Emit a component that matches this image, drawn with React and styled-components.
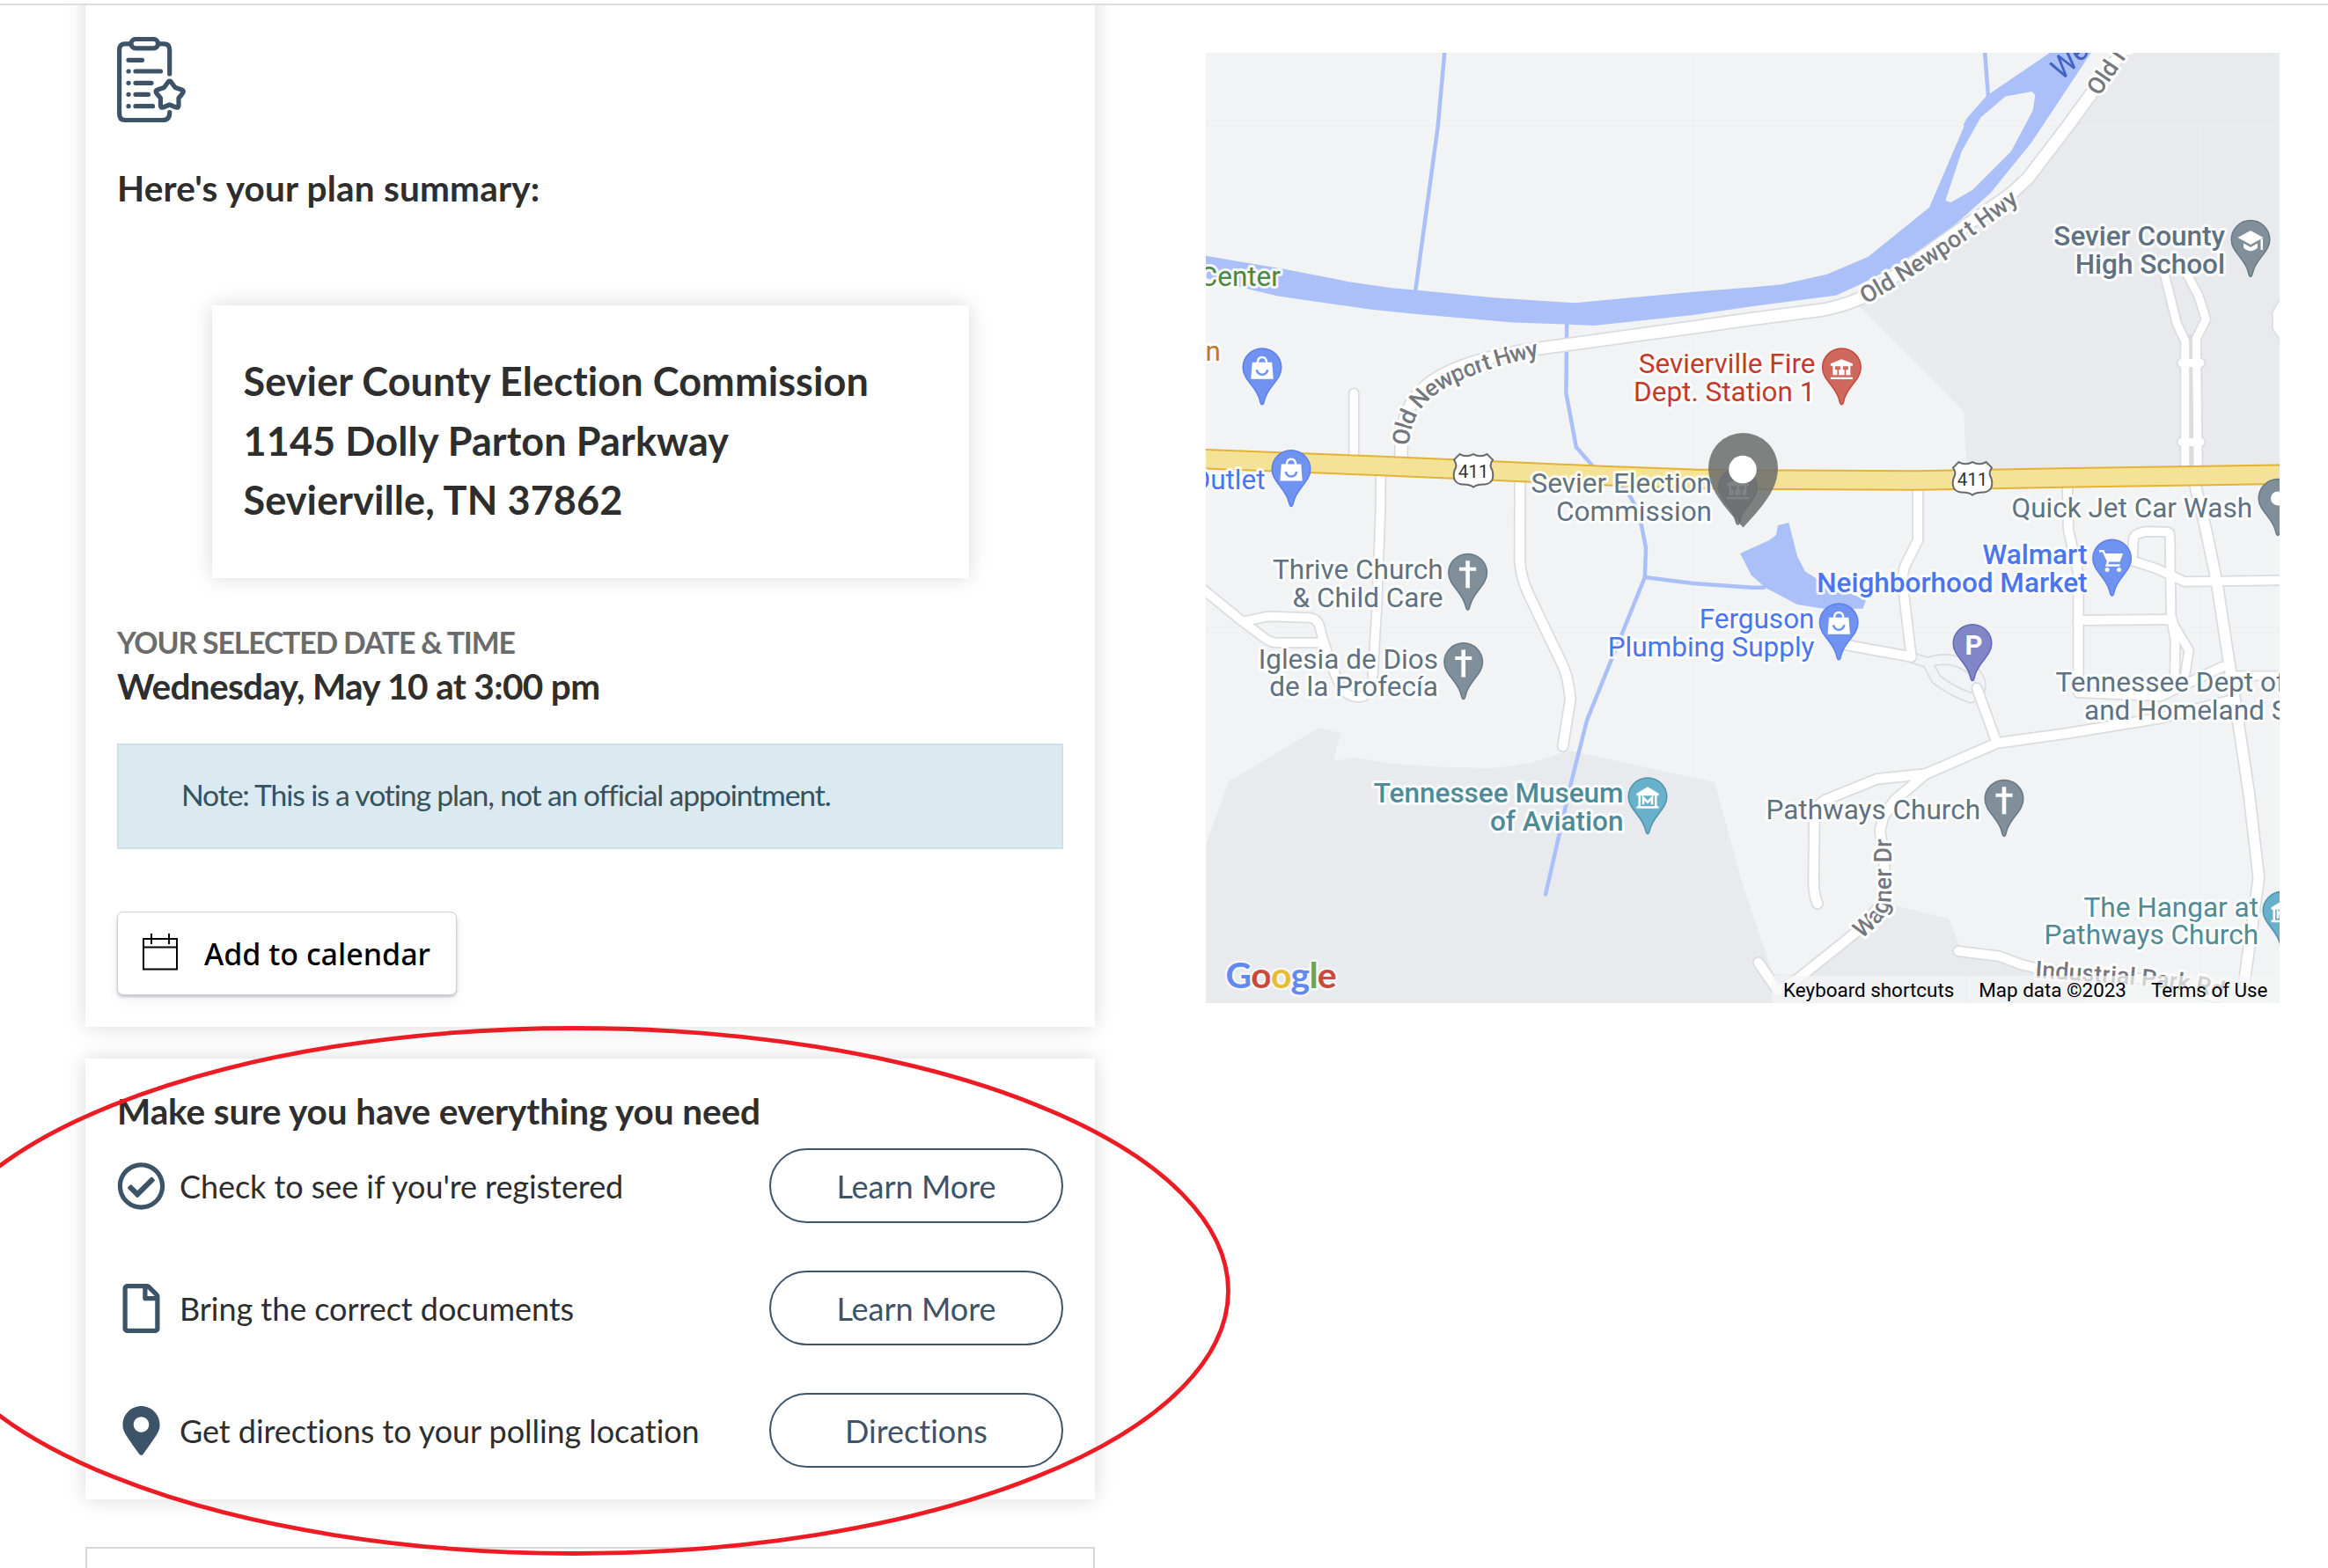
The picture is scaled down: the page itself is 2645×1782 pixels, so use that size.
import React from "react";
import styled, { createGlobalStyle, css } from "styled-components";
import { FaRegCheckCircle, FaRegFile, FaMapMarkerAlt } from "react-icons/fa";

const GlobalStyle = createGlobalStyle`
  * {
    box-sizing: border-box;
  }
  body {
    margin: 0;
    background: #fff;
    color: #2e2e2e;
    font-family: Lato, "Liberation Sans", sans-serif;
    font-variant-ligatures: none;
  }
`;

const steps = [
  { icon: FaRegCheckCircle, text: "Check to see if you're registered", action: "Learn More" },
  { icon: FaRegFile, text: "Bring the correct documents", action: "Learn More" },
  { icon: FaMapMarkerAlt, text: "Get directions to your polling location", action: "Directions" },
];

const river =
  "M0 230.7L90 246L164 260.4L213 267.5L237 269.6L327 278.2L419.6 284.3L486 278L553.5 271.8L620 266.4L654.7 263.2L705.7 251.8L752.7 231.8L822 175.7L861.6 83.6L861 81L865 74L887 49L958.8 0H1005.7L938.4 101.4L891.4 159.6L840.4 205L783 242.5L742 264L716 275.7L620 288.2L553.5 298L441 310L408.6 308.6L349 306.4L237 296.8L188 291.8L82 276.4L41 266.8L0 256Z" +
  "M908.6 49.6L880.4 73.6L858.8 112L840.4 168L846.5 170L871 156L915 112L939.6 65.7L942.4 48L938.4 44Z";

const streams = [
  "M271.4 -2L263.7 83.6L238 272",
  "M885 -2L889 50",
  "M410.2 306L409.4 387L420.8 448L439 469L478 497L492 522L500 562.5L498.8 596L433 758.6L414.7 831L386 956.5",
  "M498.8 596L553.5 603L620 607.7H634",
];

const roads = [
  { w: 9.5, d: "M168.2 387V465" },
  { w: 9.5, d: "M198.8 478L198.4 520L194.3 631L189.4 712Q186 734 172 732Q160 732 152 718L143.3 697.6L133 666L129 651Q126 643 118 642L69.8 640.6L45 646" },
  { w: 9.5, d: "M-4 609L41 645.8L68 666Q74 670.5 82 670.5H132" },
  { w: 10.5, d: "M357 484L356.7 578Q358 597 368 618L405 695Q410 706 411.5 716L414.3 734.5L405.7 788" },
  { w: 10, d: "M809 494V554L795 582Q791 590 792 606L801.6 686.5" },
  { w: 10, d: "M722 672L801.6 686.5" },
  { w: 10, d: "M876 722L898.8 784.5" },
  { w: 10.5, d: "M695 967Q690 955 690.6 938L691.4 871Q692 856 704 849L763 825.2L818 819.6L898.8 784.5L979 773.4L1085 756L1168 735" },
  { w: 10.5, d: "M818 819.6L783 849L770 868L766 884L771 919.5V964L738 1000L672 1053L650 1066L628 1034" },
  { w: 10, d: "M978.8 490L980 542L991.4 592V727L1085 731L1154.7 698" },
  { w: 10, d: "M991 645L1098 644" },
  { w: 9.5, d: "M1222 599.5L1112 601L1081 586.6L1052.7 577.3L1054 552Q1055 546 1069 544L1092 544.5Q1096 545 1095.5 552L1096.7 642L1101.6 668L1100.8 710" },
  { w: 9, d: "M1098 647L1117 679L1113 705" },
  { w: 9, d: "M1162 708H1222" },
  { w: 11.5, d: "M1123.3 488L1136.3 542L1148.6 601.4L1169 734.5L1185.3 842L1196.3 938L1180 1055" },
  { w: 9, d: "M1088 246L1103 307L1112.7 328V476" },
  { w: 9, d: "M1112 246L1128 276.4L1136.3 303L1125.3 325L1127.3 476" },
  { w: 9, d: "M1109 352.5H1130" },
  { w: 9, d: "M1109 442.5H1130" },
  { w: 10, d: "M855 1021L901.6 1026.8L926 1036L946.5 1041L1060 1052L1150 1074" },
  { w: 13, d: "M221.6 470L222.4 440.7Q224 402 249 380Q282 350 376 336.4L553.5 312L620 302.5L701.6 292Q740 284 760 270L915 160L934 142.5L979 83.6L1007.8 44L1045 -6" },
];

const highway =
  "M-4 461.6L200 469.5L304 474L450 480.5L553.5 484.2L650 485.2L808 486L987 482.8L1224 479.2";

const SLATE = "#5f7281";
const BLUE = "#4a75ee";
const TEAL = "#4f8b97";
const RED = "#c5392b";

const places = [
  { x: 575, y: 500, color: SLATE, lines: ["Sevier Election", "Commission"] },
  { x: 692.5, y: 364, color: RED, lines: ["Sevierville Fire", "Dept. Station 1"] },
  { x: 1158, y: 219, color: SLATE, bold: true, lines: ["Sevier County", "High School"] },
  { x: 1189, y: 528, color: SLATE, lines: ["Quick Jet Car Wash"] },
  { x: 1001.5, y: 581, color: BLUE, bold: true, lines: ["Walmart", "Neighborhood Market"] },
  { x: 691.5, y: 654, color: BLUE, lines: ["Ferguson", "Plumbing Supply"] },
  { x: 269.5, y: 598.2, color: SLATE, lines: ["Thrive Church", "& Child Care"] },
  { x: 264, y: 699.5, color: SLATE, lines: ["Iglesia de Dios", "de la Profecía"] },
  { x: 474.5, y: 852, color: TEAL, bold: true, lines: ["Tennessee Museum", "of Aviation"] },
  { x: 880, y: 870.5, color: SLATE, lines: ["Pathways Church"] },
  { x: 1196, y: 981.6, color: TEAL, lines: ["The Hangar at", "Pathways Church"] },
  { x: 85, y: 265, color: "#4b873c", lines: ["Center"] },
  { x: 17, y: 349.5, color: "#c47a1c", lines: ["n"] },
  { x: 67.5, y: 495.8, color: BLUE, lines: ["Outlet"] },
];

const pinColors = {
  blue: ["#7092f1", "#5c80ea"],
  slate: ["#818f9b", "#657886"],
  red: ["#cf695d", "#c4483a"],
  teal: ["#69b0cb", "#4e94a8"],
  purple: ["#8086c6", "#6268bd"],
};

const pins = [
  { x: 64, y: 357.8, tone: "blue", glyph: "bag" },
  { x: 97, y: 473.5, tone: "blue", glyph: "bag" },
  { x: 722.4, y: 357.8, tone: "red", glyph: "civic" },
  { x: 1187, y: 212.4, tone: "slate", glyph: "school" },
  { x: 1218, y: 506.4, tone: "slate", glyph: "dot" },
  { x: 297.6, y: 591.2, tone: "slate", glyph: "cross" },
  { x: 292.7, y: 692.6, tone: "slate", glyph: "cross" },
  { x: 502, y: 845.7, tone: "teal", glyph: "museum" },
  { x: 1029.6, y: 575, tone: "blue", glyph: "cart" },
  { x: 719.2, y: 647.8, tone: "blue", glyph: "bag" },
  { x: 871, y: 671.5, tone: "purple", glyph: "parking" },
  { x: 907, y: 848.3, tone: "slate", glyph: "cross" },
  { x: 1223, y: 975.2, tone: "teal", glyph: "museum" },
  { x: 604.5, y: 494, tone: "slate", glyph: "civic" },
];

const glyphs = {
  bag: (
    <>
      <path d="M-11.2 -6H11.2L12.7 13H-12.7Z" fill="#fff" />
      <path d="M-5.2 -5Q-5.2 -11.8 0 -11.8Q5.2 -11.8 5.2 -5" fill="none" stroke="#fff" strokeWidth="2.4" />
      <path d="M-6.2 2.5Q-5 8 0 8Q5 8 6.2 2.5" fill="none" stroke="#7092f1" strokeWidth="2.6" />
    </>
  ),
  civic: (
    <path
      d="M0 -9.5L12.5 -4.5V-2H-12.5V-4.5ZM-10 -2H10V8.5H-10ZM-12.5 11H12.5V13.2H-12.5Z M-7.5 -1.5V2.5H-5V8.5H-3.2V2.5H-1.5V-1.5ZM1.5 -1.5V2.5H3.2V8.5H5V2.5H7.5V-1.5Z"
      fill="#fff"
      fillRule="evenodd"
    />
  ),
  school: (
    <>
      <path d="M0 -10.5L14.5 -2.5L0 5.5L-14.5 -2.5Z" fill="#fff" />
      <path d="M-8 4L0 8.5L8 4V9Q0 16.5 -8 9ZM11.5 -1H14V11.5H11.5Z" fill="#fff" />
    </>
  ),
  dot: <circle r="8" fill="#fff" />,
  cross: <path d="M-2.3 -14H2.3V-6.5H9.5V-2.5H2.3V17H-2.3V-2.5H-9.5V-6.5H-2.3Z" fill="#fff" />,
  museum: (
    <>
      <path d="M0 -11.5L12.5 -4V-1.5H-12.5V-4ZM-10.5 -2H-8V11H-10.5ZM8 -2H10.5V11H8ZM-12.5 10.5H12.5V13H-12.5Z" fill="#fff" />
      <path d="M-5 8.5V1L0 6L5 1V8.5" fill="none" stroke="#fff" strokeWidth="2.6" />
    </>
  ),
  cart: (
    <>
      <path d="M-14.5 -8.8H-10L-4.5 3L-6 7.5H9" fill="none" stroke="#fff" strokeWidth="2.4" />
      <path d="M-8.5 -6H12.5L9 3.5H-4.5Z" fill="#fff" />
      <circle cx="-5.5" cy="12.5" r="2.5" fill="#fff" />
      <circle cx="8" cy="12.5" r="2.5" fill="#fff" />
    </>
  ),
  parking: (
    <text x="1.5" y="12" textAnchor="middle" fontSize="31" fontWeight="700" fill="#fff">
      P
    </text>
  ),
};

const MapPin = ({ x, y, tone, glyph }) => {
  const [fill, edge] = pinColors[tone];
  return (
    <g transform={`translate(${x} ${y})`}>
      <path
        d="M0 42C-1.5 42 -2 40 -2.5 37.5C-5.5 22 -21.8 14 -21.8 0A21.8 21.8 0 0 1 21.8 0C21.8 14 5.5 22 2.5 37.5C2 40 1.5 42 0 42Z"
        fill={fill}
        stroke={edge}
        strokeWidth="1.5"
      />
      {glyphs[glyph]}
    </g>
  );
};

const Place = ({ x, y, color, bold, lines, anchor = "end" }) => (
  <MapLabel $color={color} $bold={bold} textAnchor={anchor}>
    {lines.map((line, i) => (
      <tspan key={line} x={x} y={y + i * 31.5}>
        {line}
      </tspan>
    ))}
  </MapLabel>
);

const Shield = ({ x, y }) => (
  <g transform={`translate(${x} ${y})`}>
    <path
      d="M-15.5 -18.5Q-8 -14 0 -18.5Q8 -14 15.5 -18.5L22 -12Q17.5 -6 21.5 0Q25 14 13 16Q5 15.5 0 19Q-5 15.5 -13 16Q-25 14 -21.5 0Q-17.5 -6 -22 -12Z"
      fill="#fff"
      stroke="#666a6d"
      strokeWidth="2"
    />
    <text y="8" textAnchor="middle" fontSize="20.5" fill="#333">
      411
    </text>
  </g>
);

const ClipboardIcon = () => (
  <BlockSvg width="78" height="98" viewBox="0 0 78 98" fill="none" stroke="#3d5368" strokeWidth="5.2" strokeLinecap="round" strokeLinejoin="round">
    <path d="M14 7.8H9Q2.6 7.8 2.6 14.5V87Q2.6 94.5 9 94.5H52Q59.7 94.5 59.7 86V85.5M59.7 42V14.5Q59.7 7.8 53 7.8H48" />
    <rect x="16" y="2.5" width="30.5" height="10.3" rx="5" />
    <path d="M13 26.3H28.5M13 39H13.1M21 39H49.5M13 52.3H13.1M21 52.3H39M13 65.3H13.1M21 65.3H35.5M13 78.7H13.1M21 78.7H40.5" />
    <path d="M59.7 50Q61 50 62 52L66 57.5L73.5 60Q76.5 61 74.5 64L70 69.5V78Q70 81 67 80L59.7 77L52.4 80Q49.4 81 49.4 78V69.5L44.9 64Q42.9 61 45.9 60L53.4 57.5L57.4 52Q58.4 50 59.7 50Z" />
  </BlockSvg>
);

const CalendarIcon = () => (
  <BlockSvg width="40" height="42" viewBox="0 0 40 42" fill="none" stroke="#000" strokeWidth="2">
    <path d="M1 6H39V40.5H1ZM1 15.5H39M10 0V12M30 0V12" />
  </BlockSvg>
);

const PollingMap = () => (
  <MapFrame>
    <MapCanvas viewBox="0 0 1220 1080">
      <defs>
        <path id="newport-west" d="M231 447C233 402 262 383 300 368S350 352 410 337" />
        <path id="newport-mid" d="M750 286Q844 231 930 165" />
        <path id="newport-east" d="M1015 50L1071 -32" />
        <path id="river-name" d="M973 32L1040 -36" />
        <path id="wagner" d="M745 1007Q779 982 779 956V856" />
        <path id="industrial" d="M942 1051Q1050 1058 1100 1064T1200 1090" />
      </defs>

      <path d="M1049 0L1014 48L942 144L918 166L742 287L861 407L865 486H1220V0Z" fill="#e8eaed" />
      <path d="M0 901L26 828L129 767L153 773.4L145 805L168 801L213 808L266 811.5L325 813.3L368 807.4L413 793L578 829L610 945L644 1047L673 1049L742 997L783 969L844 984L857 1016L902 1027L938 1042L1000 1060V1080H0Z" fill="#e8eaed" />
      <path d="M1109 320H1130V476H1109Z" fill="#dadce0" />
      <path d="M0 83.5H1220M0 659.5H1220M553.5 0V830M1129.5 83V1080" stroke="#edeff1" />

      <path d={river} fill="#abc0f8" fillRule="evenodd" />
      <path d="M607 569L640 554L648 548L650 537L662.4 534L672 572L681 589.5L698 600L750 622L746.5 631.7H702L672 627L636 608L620 594Z" fill="#abc0f8" />
      {streams.map((d) => (
        <path key={d} d={d} fill="none" stroke="#abc0f8" strokeWidth="4.5" strokeLinecap="round" />
      ))}

      <g fill="none" strokeLinejoin="round">
        <path d="M801 687L820 693Q845 684 866 698T877 730M820 693L830 712Q850 727 869 733L878 730" stroke="#dadce0" strokeWidth="13" />
        <path d="M801 687L820 693Q845 684 866 698T877 730M820 693L830 712Q850 727 869 733L878 730" stroke="#f1f3f4" strokeWidth="9.5" />
      </g>
      <g fill="none" strokeLinecap="round" strokeLinejoin="round">
        {roads.map(({ d, w }) => (
          <path key={d} d={d} stroke="#dadce0" strokeWidth={w + 3.5} />
        ))}
        {roads.map(({ d, w }) => (
          <path key={d} d={d} stroke="#fff" strokeWidth={w} />
        ))}
      </g>
      <path d="M1222 278L1212 294V314L1222 328Z" fill="#fff" stroke="#dadce0" strokeWidth="1.5" />
      <path d={highway} fill="none" stroke="#e5b238" strokeWidth="23.5" />
      <path d={highway} fill="none" stroke="#f4e297" strokeWidth="19.5" />

      <Shield x={304} y={474.6} />
      <Shield x={871} y={483.6} />

      <RoadLabel $spacing="-1.1px">
        <textPath href="#newport-west">Old Newport Hwy</textPath>
      </RoadLabel>
      <RoadLabel>
        <textPath href="#newport-mid">Old Newport Hwy</textPath>
      </RoadLabel>
      <RoadLabel>
        <textPath href="#newport-east">Old Newport</textPath>
      </RoadLabel>
      <RoadLabel>
        <textPath href="#wagner">Wagner Dr</textPath>
      </RoadLabel>
      <RoadLabel>
        <textPath href="#industrial">Industrial Park Rd</textPath>
      </RoadLabel>
      <RiverLabel>
        <textPath href="#river-name">West</textPath>
      </RiverLabel>

      {places.map((p) => (
        <Place key={p.x + p.lines[0]} {...p} />
      ))}
      <Place x={965.5} y={726} color={SLATE} anchor="start" lines={["Tennessee Dept of"]} />
      <Place x={998} y={757.5} color={SLATE} anchor="start" lines={["and Homeland Security"]} />
      {pins.map((p) => (
        <MapPin key={`${p.x}-${p.y}`} {...p} />
      ))}

      <path
        d="M610.5 539.5C588 515 571 496 571 471.5A39.5 39.5 0 0 1 650 471.5C650 496 633 515 610.5 539.5Z"
        fill="#6c6e6d"
        opacity="0.86"
      />
      <circle cx="610" cy="473.6" r="15.8" fill="#fff" />

      <GoogleLogo x="22.5" y="1062.5">
        <tspan fill="#6388f2">G</tspan>
        <tspan fill="#c94a3b">o</tspan>
        <tspan fill="#e9bd33">o</tspan>
        <tspan fill="#6388f2">g</tspan>
        <tspan fill="#6aa557">l</tspan>
        <tspan fill="#c94a3b">e</tspan>
      </GoogleLogo>
    </MapCanvas>
    <MapFooter>
      <MapCredit>Keyboard shortcuts</MapCredit>
      <MapCredit>Map data ©2023</MapCredit>
      <MapCredit>Terms of Use</MapCredit>
    </MapFooter>
  </MapFrame>
);

function App() {
  return (
    <Page>
      <GlobalStyle />
      <TopRule />
      <Main>
        <Column>
          <Card $first>
            <ClipboardIcon />
            <SummaryTitle $spacing="0.2px">Here's your plan summary:</SummaryTitle>
            <Address>
              Sevier County Election Commission
              <br />
              1145 Dolly Parton Parkway
              <br />
              Sevierville, TN 37862
            </Address>
            <Eyebrow>YOUR SELECTED DATE &amp; TIME</Eyebrow>
            <Title $spacing="-0.65px">Wednesday, May 10 at 3:00 pm</Title>
            <Note>Note: This is a voting plan, not an official appointment.</Note>
            <CalendarButton>
              <CalendarIcon />
              <span>Add to calendar</span>
            </CalendarButton>
          </Card>
          <Card>
            <Title $spacing="-0.1px">Make sure you have everything you need</Title>
            <Steps>
              {steps.map(({ icon: Icon, text, action }) => (
                <Step key={text}>
                  <StepIcon>
                    <Icon />
                  </StepIcon>
                  <StepText>{text}</StepText>
                  <PillButton>{action}</PillButton>
                </Step>
              ))}
            </Steps>
          </Card>
          <NextPanel />
        </Column>
        <PollingMap />
      </Main>
      <Highlight viewBox="0 0 2645 1782">
        <ellipse cx="653" cy="1467" rx="742.5" ry="298.5" fill="none" stroke="#ed1c24" strokeWidth="4.8" />
      </Highlight>
    </Page>
  );
}

const Page = styled.div`
  position: relative;
  width: 2645px;
  height: 1782px;
  overflow: hidden;
`;
const TopRule = styled.div`
  height: 6px;
  border-bottom: 2px solid #ddd;
`;
const Main = styled.main`
  display: flex;
  align-items: flex-start;
  gap: 126px;
  height: 1776px;
  padding-left: 97px;
  overflow: hidden;
`;
const Column = styled.div`
  display: flex;
  flex-direction: column;
  width: 1147px;
`;
const Card = styled.section`
  padding: 36px;
  margin-bottom: 36px;
  background: #fff;
  box-shadow: 0 0 22.5px rgba(0, 0, 0, 0.15);
  ${(props) =>
    props.$first &&
    css`
      height: 1201px;
      margin-top: -40px;
      padding-top: 76px;
    `}
  & + & {
    height: 501px;
    margin-bottom: 54px;
  }
`;
const BlockSvg = styled.svg`
  display: block;
  flex: none;
`;
const Title = styled.h2`
  margin: 0;
  font-size: 40.5px;
  font-weight: 700;
  letter-spacing: ${(props) => props.$spacing || "normal"};
  line-height: 48px;
`;
const SummaryTitle = styled(Title)`
  margin: 50px 0 109px;
`;
const Address = styled.div`
  width: 860px;
  height: 310px;
  margin: 0 auto;
  padding: 53px 36px;
  font-size: 45px;
  font-weight: 700;
  letter-spacing: 0.1px;
  line-height: 67.5px;
  box-shadow: 0 0 22.5px rgba(0, 0, 0, 0.15);
`;
const Eyebrow = styled.div`
  margin-top: 48px;
  color: #6b6b6b;
  font-size: 33.75px;
  font-weight: 700;
  letter-spacing: -1.125px;
  line-height: 51px;
`;
const Note = styled.div`
  height: 120px;
  margin: 41px 0 71px;
  padding-left: 71px;
  border: 2px solid #cbe2e9;
  background: #daeaf0;
  color: #35525e;
  font-size: 33.75px;
  letter-spacing: -1.15px;
  line-height: 113px;
`;
const CalendarButton = styled.button`
  display: flex;
  align-items: center;
  gap: 30px;
  width: 386px;
  height: 95px;
  padding: 0 28px 4px;
  border: 1px solid #d0d0d6;
  border-radius: 7px;
  background: #fff;
  box-shadow: 0 2px 3px rgba(40, 40, 70, 0.25), 0 6px 14px rgba(40, 40, 70, 0.06);
  color: #000;
  font-family: "Noto Sans", "Open Sans", sans-serif;
  font-size: 34px;
  font-weight: 500;
  white-space: nowrap;
  span {
    padding-top: 5px;
  }
`;
const Steps = styled.div`
  display: flex;
  flex-direction: column;
  gap: 54px;
  margin-top: 18px;
`;
const Step = styled.div`
  display: flex;
  align-items: center;
  height: 85px;
  font-size: 36px;
`;
const StepIcon = styled.span`
  display: flex;
  justify-content: center;
  width: 55px;
  margin-right: 16px;
  color: #3d5368;
  font-size: 56px;
`;
const StepText = styled.span`
  flex: 1;
  letter-spacing: -0.06px;
`;
const PillButton = styled.button`
  width: 334px;
  height: 85px;
  padding: 0;
  border: 2px solid #3d5368;
  border-radius: 43px;
  background: #fff;
  color: #3d5368;
  font: inherit;
  font-variant-ligatures: none;
`;
const NextPanel = styled.section`
  height: 60px;
  border: 2px solid #d8d8d8;
`;
const MapFrame = styled.div`
  position: relative;
  width: 1220px;
  height: 1080px;
  margin-top: 54px;
  overflow: hidden;
  background: #f1f3f4;
  font-family: Roboto, "Liberation Sans", sans-serif;
`;
const MapCanvas = styled.svg`
  display: block;
  width: 100%;
  height: 100%;
`;
const MapLabel = styled.text`
  fill: ${(props) => props.$color};
  font-size: 31.5px;
  font-weight: ${(props) => (props.$bold ? 500 : 400)};
  paint-order: stroke;
  stroke: rgba(255, 255, 255, 0.85);
  stroke-width: 6px;
  stroke-linejoin: round;
`;
const RoadLabel = styled.text`
  fill: #74787e;
  font-size: 27px;
  font-weight: 500;
  letter-spacing: ${(props) => props.$spacing || "normal"};
  paint-order: stroke;
  stroke: #fff;
  stroke-width: 6px;
  stroke-linejoin: round;
`;
const RiverLabel = styled.text`
  fill: #3f61c4;
  font-size: 34px;
  font-style: italic;
`;
const GoogleLogo = styled.text`
  font-family: Lato, sans-serif;
  font-size: 41px;
  font-weight: 700;
  letter-spacing: -0.8px;
  paint-order: stroke;
  stroke: #f6f7f8;
  stroke-width: 5px;
  stroke-linejoin: round;
`;
const MapFooter = styled.div`
  position: absolute;
  right: 0;
  bottom: 0;
  display: flex;
  gap: 1px;
`;
const MapCredit = styled.span`
  height: 31px;
  padding: 0 13.5px;
  background: rgba(245, 245, 245, 0.7);
  color: #000;
  font-size: 22.4px;
  line-height: 32px;
  white-space: nowrap;
`;
const Highlight = styled.svg`
  position: absolute;
  inset: 0;
  width: 2645px;
  height: 1782px;
  pointer-events: none;
`;

export default App;
